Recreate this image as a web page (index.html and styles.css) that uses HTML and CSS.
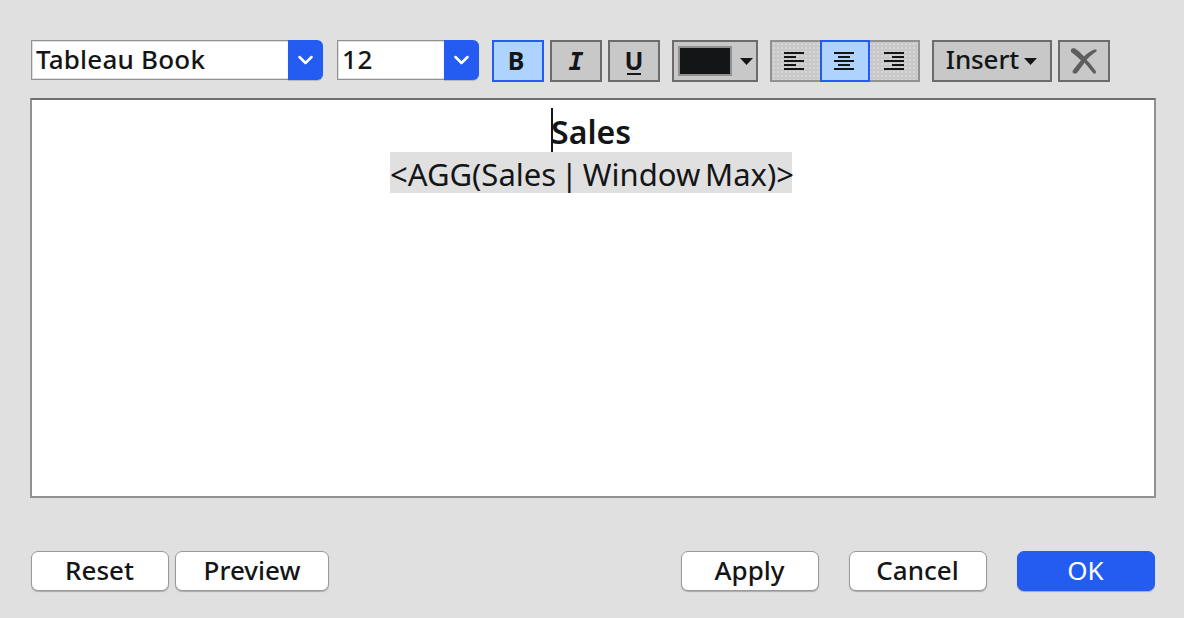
FILE: index.html
```html
<!DOCTYPE html>
<html lang="en">
<head>
<meta charset="utf-8">
<title>Edit Title</title>
<link rel="stylesheet" href="styles.css">
</head>
<body>
<main class="dialog">
  <div class="toolbar">
    <div class="combo combo-font"><span class="combo-value"><span class="t-font">Tableau Book</span></span><span class="combo-arrow"><svg width="16" height="10" viewBox="0 0 16 10"><path d="M1.500 2l6 6 6-6" fill="none" stroke="#fff" stroke-width="2.500" stroke-linecap="round" stroke-linejoin="round"/></svg></span></div>
    <div class="combo combo-size"><span class="combo-value"><span class="t-size">12</span></span><span class="combo-arrow"><svg width="16" height="10" viewBox="0 0 16 10"><path d="M1.500 2l6 6 6-6" fill="none" stroke="#fff" stroke-width="2.500" stroke-linecap="round" stroke-linejoin="round"/></svg></span></div>
    <div class="styles">
      <button class="tool active"><b class="glyph glyph-bold">B</b></button>
      <button class="tool"><b class="glyph glyph-italic">I</b></button>
      <button class="tool"><b class="glyph glyph-underline">U</b></button>
    </div>
    <button class="tool color"><span class="swatch"></span><svg class="caret" width="14" height="7" viewBox="0 0 14 7"><path d="M0 0h13L6.500 7z" fill="#141517"/></svg></button>
    <div class="align">
      <button class="seg seg-left"><svg width="20" height="18" viewBox="0 0 20 18"><path d="M0 1h20M0 5h12M0 9h20M0 13h12M0 17h20" stroke="#141517" stroke-width="2"/></svg></button>
      <button class="seg active"><svg width="20" height="18" viewBox="0 0 20 18"><path d="M0 1h20M4 5h12M0 9h20M4 13h12M0 17h20" stroke="#141517" stroke-width="2"/></svg></button>
      <button class="seg"><svg width="20" height="18" viewBox="0 0 20 18"><path d="M0 1h20M8 5h12M0 9h20M8 13h12M0 17h20" stroke="#141517" stroke-width="2"/></svg></button>
    </div>
    <button class="tool insert"><span class="t-insert">Insert</span><svg width="14" height="7" viewBox="0 0 14 7"><path d="M0 0h13L6.500 7z" fill="#141517"/></svg></button>
    <button class="tool"><svg class="clear" width="28" height="28" viewBox="0 0 28 28"><path d="M1 3C1 1 3.500.8 5 1.500c3.500 2 6 4.700 9 8 3.500-3.500 7-5.700 10-7h2.500v2C23 6.500 19.500 9.500 16.500 12.800c3.500 3.500 6.500 7.500 9.300 11.200v2.500h-2.300c-3-3.500-6-7.500-9-10.800-2.500 3-4.500 6.300-7 9.600-1 2-4.500 1.700-5-.3 0-1 .5-2 1.500-3 2.500-3 4.500-5.800 7-8.700C8 10.500 4.500 7.500 1 5z" fill="#5f5d5f"/></svg></button>
  </div>
  <div class="editor">
    <div class="line line-title"><span class="caret-bar"></span><span class="t-sales">Sales</span></div>
    <div class="line line-field"><span class="field"><span class="t-field">&lt;AGG(Sales | Window Max)&gt;</span></span></div>
  </div>
  <div class="footer">
    <button class="btn"><span class="t-reset">Reset</span></button>
    <button class="btn btn-preview"><span class="t-preview">Preview</span></button>
    <button class="btn btn-apply"><span class="t-apply">Apply</span></button>
    <button class="btn btn-cancel"><span class="t-cancel">Cancel</span></button>
    <button class="btn btn-ok"><span class="t-ok">OK</span></button>
  </div>
</main>
</body>
</html>
```

FILE: styles.css
```css
* { box-sizing: border-box; }
body { margin: 0; background: #e0e0e0; color: #141517; font: 500 26px/36px "Noto Sans", "Open Sans", sans-serif; }
button { font: inherit; color: inherit; padding: 0; margin: 0; display: flex; align-items: center; justify-content: center; white-space: nowrap; }
svg { display: block; flex: none; }
.dialog { width: 1184px; height: 618px; padding: 40px 28px 0 30px; overflow: hidden; }
.toolbar { display: flex; align-items: flex-start; height: 58px; padding-left: 1px; }
.combo { display: flex; height: 40px; margin-right: 14px; }
.combo-font { width: 292px; }
.combo-size { width: 142px; margin-right: 13px; }
.combo-value { flex: 1; background: #fff; border: 1px solid #919191; border-right: 0; box-shadow: inset 1px 1px #dedede, inset 0 -1px #dedede; padding: 0 0 0 4px; white-space: nowrap; }
.t-font { letter-spacing: .2px; }
.t-size { letter-spacing: .6px; }
.combo-arrow { width: 35px; background: #245cf2; border-radius: 0 6px 6px 0; display: flex; align-items: center; justify-content: center; box-shadow: 0 1px 1px #b5b5b5; }
.styles { display: flex; gap: 6px; margin-right: 12px; }
.tool { width: 52px; height: 42px; background: #c8c8c8; border: 2px solid #6e6b6c; }
.tool.active { background: #aed3ff; border-color: #245cf2; }
.glyph { font: 700 25px/30px "Noto Sans", sans-serif; }
.glyph-bold { padding: 0 4px 2px 0; }
.glyph-italic { font-family: "DejaVu Sans Mono", monospace; font-style: italic; padding-top: 2px; }
.glyph-underline { border-bottom: 2px solid #141517; line-height: 25px; width: 14px; display: flex; justify-content: center; }
.color { width: 86px; margin-right: 12px; justify-content: flex-start; padding-left: 4px; }
.swatch { width: 54px; height: 30px; background: #141517; border: 2px solid #919191; }
.color .caret { margin-left: 8px; }
.align { display: flex; width: 150px; height: 42px; margin-right: 12px; border: 2px solid #919191; background: #c8c8c8 radial-gradient(circle, #d8d8d8 1px, transparent 1px) 0 0 / 4px 4px; }
.seg { flex: 0 0 48px; border: 0; background: none; }
.seg-left { padding-right: 4px; }
.seg.active { flex: 0 0 50px; margin: -2px 0; padding-right: 2px; border: 2px solid #245cf2; background: #aed3ff; }
.insert { width: 120px; margin-right: 6px; gap: 5px; }
.t-insert { padding-bottom: 4px; letter-spacing: -.1px; }
.editor { width: 1126px; height: 400px; background: #fff; border: 2px solid #919191; border-top-color: #706d6e; padding-top: 8px; }
.line { display: flex; justify-content: center; }
.line-title { position: relative; height: 44px; font-size: 32px; line-height: 47px; font-weight: 600; padding-right: 4px; }
.caret-bar { position: absolute; left: 519px; top: 0; width: 2px; height: 44px; background: #141517; }
.line-field { padding-right: 4px; }
.field { width: 402px; height: 41px; background: #e0e0e0; font-size: 31px; line-height: 44px; font-weight: 400; white-space: nowrap; }
.t-field { word-spacing: -3.3px; }
.footer { display: flex; padding: 53px 0 0 1px; }
.btn { width: 138px; height: 40px; background: #fff; border: 1px solid #999; border-radius: 7px; box-shadow: 0 1px 1px #aaa; padding: 0 1px 2px 0; }
.btn-preview { width: 154px; margin-left: 6px; padding-right: 0; }
.btn-apply { margin-left: 352px; }
.btn-cancel { margin-left: 30px; }
.btn-ok { margin-left: 30px; background: #245cf2; border-color: #245cf2; color: #fff; font-weight: 400; }
```
